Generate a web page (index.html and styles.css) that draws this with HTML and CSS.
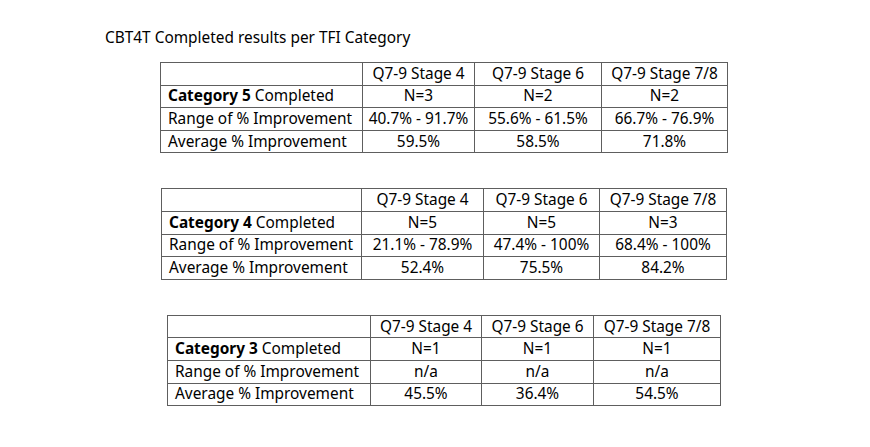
FILE: index.html
```html
<!DOCTYPE html>
<html>
<head>
<meta charset="utf-8">
<link rel="stylesheet" href="styles.css">
</head>
<body>
<div class="page">
  <p class="title">CBT4T Completed results per TFI Category</p>

  <table class="results t1">
    <colgroup><col class="c1"><col class="c2"><col class="c3"><col class="c4"></colgroup>
    <tr><td class="label"></td><td>Q7-9 Stage 4</td><td>Q7-9 Stage 6</td><td>Q7-9 Stage 7/8</td></tr>
    <tr><td class="label"><b>Category 5</b> Completed</td><td>N=3</td><td>N=2</td><td>N=2</td></tr>
    <tr><td class="label">Range of % Improvement</td><td>40.7% - 91.7%</td><td>55.6% - 61.5%</td><td>66.7% - 76.9%</td></tr>
    <tr><td class="label">Average % Improvement</td><td>59.5%</td><td>58.5%</td><td>71.8%</td></tr>
  </table>

  <table class="results t2">
    <colgroup><col class="c1"><col class="c2"><col class="c3"><col class="c4"></colgroup>
    <tr><td class="label"></td><td>Q7-9 Stage 4</td><td>Q7-9 Stage 6</td><td>Q7-9 Stage 7/8</td></tr>
    <tr><td class="label"><b>Category 4</b> Completed</td><td>N=5</td><td>N=5</td><td>N=3</td></tr>
    <tr><td class="label">Range of % Improvement</td><td>21.1% - 78.9%</td><td>47.4% - 100%</td><td>68.4% - 100%</td></tr>
    <tr><td class="label">Average % Improvement</td><td>52.4%</td><td>75.5%</td><td>84.2%</td></tr>
  </table>

  <table class="results t3">
    <colgroup><col class="c1"><col class="c2"><col class="c3"><col class="c4"></colgroup>
    <tr><td class="label"></td><td>Q7-9 Stage 4</td><td>Q7-9 Stage 6</td><td>Q7-9 Stage 7/8</td></tr>
    <tr><td class="label"><b>Category 3</b> Completed</td><td>N=1</td><td>N=1</td><td>N=1</td></tr>
    <tr><td class="label">Range of % Improvement</td><td>n/a</td><td>n/a</td><td>n/a</td></tr>
    <tr><td class="label">Average % Improvement</td><td>45.5%</td><td>36.4%</td><td>54.5%</td></tr>
  </table>
</div>
</body>
</html>
```

FILE: styles.css
```css
html, body {
  margin: 0;
  padding: 0;
  background: #ffffff;
}
body {
  font-family: "Noto Sans", "Open Sans", sans-serif;
  font-size: 15.4px;
  color: #000000;
  width: 870px;
  height: 447px;
  overflow: hidden;
}
.page {
  padding-top: 27px;
}
.title {
  margin: 0 0 0 105px;
  font-size: 15.4px;
  line-height: 22px;
}
.results {
  border-collapse: collapse;
  table-layout: fixed;
}
.results td {
  border: 1px solid #5e5e5e;
  height: 21.6px;
  padding: 0;
  text-align: center;
  white-space: nowrap;
  line-height: 20px;
}
.results td.label {
  text-align: left;
  padding-left: 7px;
}
.results b {
  font-weight: 700;
}
.t1 {
  margin: 13px 0 0 160px;
}
.t1 .c1 { width: 202px; }
.t1 .c2 { width: 112px; }
.t1 .c3 { width: 127px; }
.t1 .c4 { width: 126px; }

.t2 {
  margin: 35px 0 0 161px;
}
.t2 .c1 { width: 200px; }
.t2 .c2 { width: 122px; }
.t2 .c3 { width: 116px; }
.t2 .c4 { width: 127px; }

.t3 {
  margin: 35px 0 0 167px;
}
.t3 .c1 { width: 203px; }
.t3 .c2 { width: 111px; }
.t3 .c3 { width: 112px; }
.t3 .c4 { width: 127px; }
```
